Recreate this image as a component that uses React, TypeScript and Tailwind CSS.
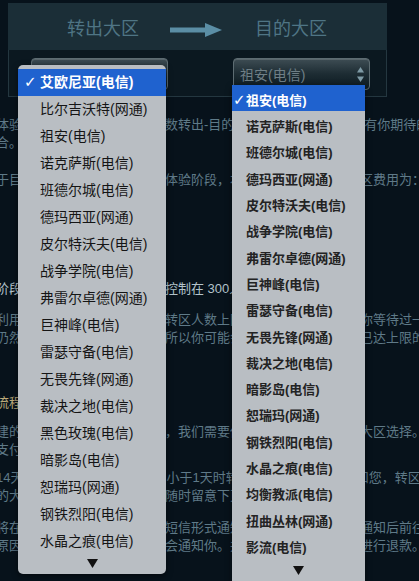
import React from 'react';

const fromRegions = [
  '艾欧尼亚(电信)', '比尔吉沃特(网通)', '祖安(电信)', '诺克萨斯(电信)', '班德尔城(电信)',
  '德玛西亚(网通)', '皮尔特沃夫(电信)', '战争学院(电信)', '弗雷尔卓德(网通)', '巨神峰(电信)',
  '雷瑟守备(电信)', '无畏先锋(网通)', '裁决之地(电信)', '黑色玫瑰(电信)', '暗影岛(电信)',
  '恕瑞玛(网通)', '钢铁烈阳(电信)', '水晶之痕(电信)',
];

const toRegions = [
  '祖安(电信)', '诺克萨斯(电信)', '班德尔城(电信)', '德玛西亚(网通)', '皮尔特沃夫(电信)',
  '战争学院(电信)', '弗雷尔卓德(网通)', '巨神峰(电信)', '雷瑟守备(电信)', '无畏先锋(网通)',
  '裁决之地(电信)', '暗影岛(电信)', '恕瑞玛(网通)', '钢铁烈阳(电信)', '水晶之痕(电信)',
  '均衡教派(电信)', '扭曲丛林(网通)', '影流(电信)',
];

function Line({ children, className = '' }: { children: React.ReactNode; className?: string }) {
  return <div className={`h-[18px] leading-[18px] ml-[-4px] ${className}`}>{children}</div>;
}

function SelectBox({ value }: { value?: string }) {
  return (
    <div className="relative w-[137px] h-[32px] rounded-[4px] border border-[#5d6c72] bg-linear-to-b from-[#3e4d54] via-[#1d2c33] to-[#0c1a20] shadow-[inset_0_1px_0_rgba(255,255,255,0.15)]">
      {value && (
        <span className="absolute left-[6px] top-[7px] text-[14px] leading-[18px] text-[#6f7f86]">{value}</span>
      )}
      <svg className="absolute right-[5px] top-[8px]" width="7" height="15" viewBox="0 0 7 15">
        <path d="M3.5 0 L7 5.5 L0 5.5 Z" fill="#7f9ba6" />
        <path d="M3.5 15 L7 9.5 L0 9.5 Z" fill="#7f9ba6" />
      </svg>
    </div>
  );
}

function ScrollArrow({ className }: { className: string }) {
  return (
    <div className={`flex items-center justify-center ${className}`}>
      <svg width="11" height="9" viewBox="0 0 11 9">
        <path d="M0 0 L11 0 L5.5 9 Z" fill="#111" />
      </svg>
    </div>
  );
}

export default function App() {
  return (
    <div className="relative w-[419px] h-[581px] overflow-hidden bg-[#07121b] font-['Liberation_Sans','Noto_Sans_CJK_SC',sans-serif]">
      {/* Region picker panel */}
      <div className="ml-[8px] mt-[3px] w-[379px]">
        <div className="h-[47px] bg-[#1b2e37] flex items-center pl-[59px] pt-[6px] text-[18px] text-[#4f7585]">
          <span>转出大区</span>
          <svg className="ml-[31px]" width="52" height="14" viewBox="0 0 52 14">
            <rect x="0" y="4.5" width="36" height="5" fill="#5b8ea5" />
            <path d="M35 0 L52 7 L35 14 Z" fill="#5b8ea5" />
          </svg>
          <span className="ml-[33px]">目的大区</span>
        </div>
        <div className="h-[47px] bg-[#0b1820] border border-t-0 border-[#243740] flex pl-[22px] pt-[8px] gap-[65px]">
          <SelectBox />
          <SelectBox value="祖安(电信)" />
        </div>
      </div>

      {/* Page text behind the menus */}
      <div className="overflow-hidden whitespace-nowrap text-[13px] text-[#5f7a88]">
        <div className="mt-[19px]">
          <Line>体验服转区期间，系统根据人数转出-目的大区比例开放，看是否有你期待的大区组</Line>
          <Line>合。</Line>
        </div>
        <div className="mt-[19px]">
          <Line>于目前转区功能仍然处在测试体验阶段，本次转区全部免费，转区费用为：0点券。</Line>
        </div>
        <div className="mt-[91px]">
          <Line className="text-[#b3c3cb]">阶段：每个大区每日转出人数控制在 300人以内。</Line>
        </div>
        <div className="mt-[13px]">
          <Line>利用转区功能的玩家较多，当转区人数上限已满时，系统将需要你等待过一段时间</Line>
          <Line>仍然会有大量玩家申请转区，所以你可能会遇到目标大区的名额已达上限的情况。</Line>
        </div>
        <div className="mt-[47px]">
          <Line className="text-[#bcaa7a]">流程</Line>
        </div>
        <div className="mt-[11px]">
          <Line>建的角色较多时处理时间较长，我们需要你再次确认转出和目的大区选择。</Line>
          <Line>支付后即可完成申请。</Line>
        </div>
        <div className="mt-[10px]">
          <Line>14天内可转区一次，剩余时间小于1天时转区时我们会以短信通知您，转区</Line>
          <Line>的大区信息会在页面显示，请随时留意下页面提示。</Line>
        </div>
        <div className="mt-[14px]">
          <Line>将在转区完成后我们会以手机短信形式通知你，请你在收到短信通知后前往</Line>
          <Line>原因导致转区失败的，我们也会通知你。并在七个工作日内为你进行退款。</Line>
        </div>
      </div>

      {/* Open dropdown: source region */}
      <div className="absolute left-[18px] top-[65px] w-[148px] rounded-[5px] bg-[#b9bec3] pt-[4px] pb-[2px] shadow-[0_2px_6px_rgba(0,0,0,0.5)]">
        {fromRegions.map((name, i) => (
          <div
            key={name}
            className={`relative h-[27px] flex items-center pl-[22px] text-[14px] ${
              i === 0 ? 'bg-[#1f62cf] text-white font-bold' : 'text-[#151515]'
            }`}
          >
            {i === 0 && (
              <span className="absolute left-[6px] font-['DejaVu_Sans',sans-serif] font-bold text-[15px]">✓</span>
            )}
            {name}
          </div>
        ))}
        <ScrollArrow className="h-[17px]" />
      </div>

      {/* Open dropdown: target region */}
      <div className="absolute left-[232px] top-[85px] w-[133px] h-[500px] rounded-t-[4px] bg-[#b9bec3] shadow-[0_2px_6px_rgba(0,0,0,0.5)]">
        {toRegions.map((name, i) => (
          <div
            key={name}
            className={`relative h-[26.3px] flex items-center pt-[5px] pl-[14px] text-[13px] font-semibold ${
              i === 0 ? 'bg-[#1f62cf] text-white font-bold' : 'text-[#232323]'
            }`}
          >
            {i === 0 && (
              <span className="absolute left-[1px] font-['DejaVu_Sans',sans-serif] font-bold text-[15px]">✓</span>
            )}
            {name}
          </div>
        ))}
        <ScrollArrow className="h-[25px]" />
      </div>
    </div>
  );
}
